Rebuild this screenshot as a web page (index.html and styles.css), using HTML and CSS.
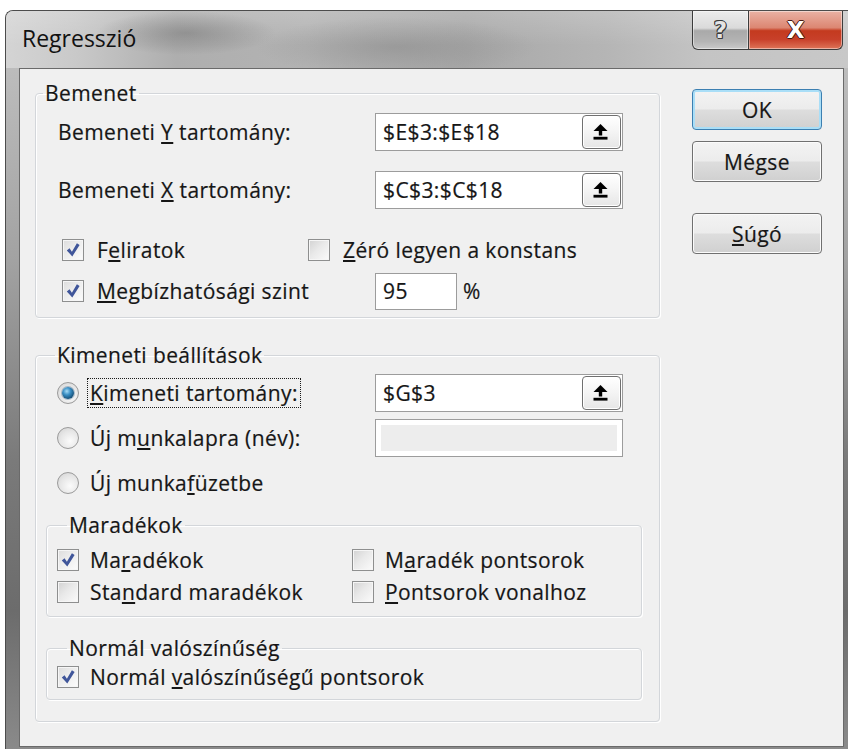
FILE: index.html
```html
<!DOCTYPE html>
<html lang="hu">
<head>
<meta charset="utf-8">
<title>Regresszió</title>
<link rel="stylesheet" href="styles.css">
</head>
<body>
<div class="window">
  <div class="titlebar">
    <span class="title">Regresszió</span>
    <div class="caption-buttons">
      <span class="cap-btn help">?</span>
      <span class="cap-btn close">X</span>
    </div>
  </div>

  <div class="client">
    <div class="main">
      <fieldset class="group group-input">
        <legend>Bemenet</legend>

        <div class="range-row">
          <span class="range-label">Bemeneti <u>Y</u> tartomány:</span>
          <div class="refedit">
            <span class="ref-text">$E$3:$E$18</span>
            <span class="collapse-btn">
              <svg width="15" height="16" viewBox="0 0 15 16"><polygon points="7.5,0 14.5,7 0.5,7" fill="#000"/><rect x="5.8" y="6" width="3.4" height="5.5" fill="#000"/><rect x="0.5" y="12.8" width="14" height="2.8" fill="#000"/></svg>
            </span>
          </div>
        </div>

        <div class="range-row range-row-x">
          <span class="range-label">Bemeneti <u>X</u> tartomány:</span>
          <div class="refedit">
            <span class="ref-text">$C$3:$C$18</span>
            <span class="collapse-btn">
              <svg width="15" height="16" viewBox="0 0 15 16"><polygon points="7.5,0 14.5,7 0.5,7" fill="#000"/><rect x="5.8" y="6" width="3.4" height="5.5" fill="#000"/><rect x="0.5" y="12.8" width="14" height="2.8" fill="#000"/></svg>
            </span>
          </div>
        </div>

        <div class="opt-row opt-row-first">
          <label class="check-item cell-labels">
            <span class="checkbox checked"><svg width="20" height="20" viewBox="0 0 20 20"><path d="M3.8 10.4 L6.5 8.2 L8.9 11.8 L13.9 3.2 L16.6 5 L9.3 16.4 Z" fill="#40569a"/></svg></span>
            <span>F<u>e</u>liratok</span>
          </label>
          <label class="check-item">
            <span class="checkbox"></span>
            <span><u>Z</u>éró legyen a konstans</span>
          </label>
        </div>

        <div class="opt-row opt-row-conf">
          <label class="check-item cell-conf">
            <span class="checkbox checked"><svg width="20" height="20" viewBox="0 0 20 20"><path d="M3.8 10.4 L6.5 8.2 L8.9 11.8 L13.9 3.2 L16.6 5 L9.3 16.4 Z" fill="#40569a"/></svg></span>
            <span><u>M</u>egbízhatósági szint</span>
          </label>
          <div class="textbox conf-box">95</div>
          <span class="percent">%</span>
        </div>
      </fieldset>

      <fieldset class="group group-output">
        <legend>Kimeneti beállítások</legend>

        <div class="radio-row radio-row-first">
          <label class="radio-item">
            <span class="radio selected"></span>
            <span class="radio-text focused"><u>K</u>imeneti tartomány:</span>
          </label>
          <div class="refedit">
            <span class="ref-text">$G$3</span>
            <span class="collapse-btn">
              <svg width="15" height="16" viewBox="0 0 15 16"><polygon points="7.5,0 14.5,7 0.5,7" fill="#000"/><rect x="5.8" y="6" width="3.4" height="5.5" fill="#000"/><rect x="0.5" y="12.8" width="14" height="2.8" fill="#000"/></svg>
            </span>
          </div>
        </div>

        <div class="radio-row">
          <label class="radio-item">
            <span class="radio"></span>
            <span class="radio-text">Új m<u>u</u>nkalapra (név):</span>
          </label>
          <div class="textbox disabled-box"></div>
        </div>

        <div class="radio-row">
          <label class="radio-item">
            <span class="radio"></span>
            <span class="radio-text">Új munka<u>f</u>üzetbe</span>
          </label>
        </div>

        <fieldset class="group sub-group group-residuals">
          <legend>Maradékok</legend>
          <div class="sub-row">
            <label class="check-item sub-cell">
              <span class="checkbox checked"><svg width="20" height="20" viewBox="0 0 20 20"><path d="M3.8 10.4 L6.5 8.2 L8.9 11.8 L13.9 3.2 L16.6 5 L9.3 16.4 Z" fill="#40569a"/></svg></span>
              <span>Ma<u>r</u>adékok</span>
            </label>
            <label class="check-item">
              <span class="checkbox"></span>
              <span>M<u>a</u>radék pontsorok</span>
            </label>
          </div>
          <div class="sub-row sub-row-second">
            <label class="check-item sub-cell">
              <span class="checkbox"></span>
              <span>Sta<u>n</u>dard maradékok</span>
            </label>
            <label class="check-item">
              <span class="checkbox"></span>
              <span><u>P</u>ontsorok vonalhoz</span>
            </label>
          </div>
        </fieldset>

        <fieldset class="group sub-group group-normal">
          <legend>Normál valószínűség</legend>
          <div class="sub-row">
            <label class="check-item">
              <span class="checkbox checked"><svg width="20" height="20" viewBox="0 0 20 20"><path d="M3.8 10.4 L6.5 8.2 L8.9 11.8 L13.9 3.2 L16.6 5 L9.3 16.4 Z" fill="#40569a"/></svg></span>
              <span>Normál <u>v</u>alószínűségű pontsorok</span>
            </label>
          </div>
        </fieldset>
      </fieldset>
    </div>

    <div class="actions">
      <span class="push-btn default">OK</span>
      <span class="push-btn">Mégse</span>
      <span class="push-btn help-btn"><u>S</u>úgó</span>
    </div>
  </div>
</div>
</body>
</html>
```

FILE: styles.css
```css
html, body {
  margin: 0;
  padding: 0;
  overflow: hidden;
  background: #ffffff;
}

body {
  font-family: "Open Sans", "Noto Sans", sans-serif;
  font-size: 21px;
  letter-spacing: 0.4px;
  color: #161616;
  -webkit-text-stroke: 0.2px #161616;
}

u {
  text-underline-offset: 2px;
}

/* ---- window frame ---- */
.window {
  margin: 10px 0 0 5px;
  width: 843px;
  height: 739px;
  box-sizing: border-box;
  border: 1px solid #4c4c4c;
  border-right: 0;
  border-bottom: 0;
  border-radius: 8px 0 0 0;
  overflow: hidden;
  display: flex;
  flex-direction: column;
  background: linear-gradient(180deg, #c4c4c4 0, #a2a2a2 250px, #7a7a7a 450px, #6c6c6c 600px, #8a8a8a 100%);
}

.titlebar {
  flex: none;
  height: 57px;
  display: flex;
  justify-content: space-between;
  align-items: flex-start;
  background:
    radial-gradient(ellipse 90px 22px at 180px 22px, rgba(105, 105, 105, 0.45), rgba(105, 105, 105, 0)),
    radial-gradient(ellipse 140px 30px at 390px 36px, rgba(120, 120, 120, 0.35), rgba(120, 120, 120, 0)),
    linear-gradient(180deg, rgba(255, 255, 255, 0.18), rgba(255, 255, 255, 0) 60%),
    linear-gradient(90deg, #d4d4d4 0, #c9c9c9 70px, #aeaeae 170px, #b3b3b3 300px, #a8a8a8 460px, #b5b5b5 600px, #c4c4c4 700px, #c8c8c8 100%);
}

.title {
  font-size: 23px;
  letter-spacing: 0;
  line-height: 30px;
  margin: 12px 0 0 16px;
  color: #111111;
  -webkit-text-stroke: 0;
}

.caption-buttons {
  display: flex;
  margin-right: 5px;
}

.cap-btn {
  height: 39px;
  box-sizing: border-box;
  border: 1px solid #3c3c3c;
  border-top: 0;
  display: flex;
  align-items: center;
  justify-content: center;
  font-family: "DejaVu Sans", sans-serif;
  font-weight: bold;
  letter-spacing: 0;
  color: #ffffff;
  -webkit-text-stroke: 0;
  box-shadow: inset 0 0 0 1px rgba(255, 255, 255, 0.45);
}

.help {
  width: 57px;
  border-radius: 0 0 0 6px;
  font-size: 23px;
  color: #e4e4e4;
  text-shadow: 1px 0 0 #3a3a3a, -1px 0 0 #3a3a3a, 0 1px 0 #3a3a3a, 0 -1px 0 #3a3a3a, 1px 1px 0 #3a3a3a, -1px -1px 0 #3a3a3a;
  background: linear-gradient(180deg, #ececec 0, #dadada 45%, #a9a9a9 52%, #b4b4b4 80%, #c9c9c9 100%);
}

.close {
  width: 94px;
  border-left: 0;
  border-radius: 0 0 6px 0;
  font-size: 23px;
  text-shadow: 0 0 1px #3a0a00, 1px 0 0 #4a1a10, -1px 0 0 #4a1a10, 0 1px 0 #4a1a10, 0 -1px 0 #4a1a10;
  background: linear-gradient(180deg, #eab2a4 0, #dc8672 44%, #c43a1f 52%, #c8402a 75%, #de7458 100%);
}

/* ---- client area ---- */
.client {
  flex: none;
  height: 679px;
  width: 825px;
  box-sizing: border-box;
  margin-left: 13px;
  border: 1px solid #6a6a6a;
  background: #f0f0f0;
  display: flex;
  align-items: flex-start;
}

.main {
  margin-left: 15px;
  width: 625px;
  flex: none;
}

/* ---- group boxes ---- */
.group {
  margin: 0;
  padding: 0;
  min-width: 0;
  border: 1px solid #d3d6da;
  border-radius: 4px;
  box-shadow: inset 1px 1px 0 #ffffff, 1px 1px 0 #ffffff;
}

.group legend {
  padding: 0 2px;
  line-height: 26px;
}

.group-input {
  margin-top: 11px;
  padding: 7px 0 7px 0;
}

.group-input legend {
  margin-left: 7px;
}

.group-output {
  margin-top: 24px;
  padding: 5px 17px 21px 10px;
}

.group-output legend {
  margin-left: 9px;
}

.sub-group legend {
  margin-left: 10px;
}

.group-residuals {
  margin-top: 10px;
  padding: 8px 0 10px 10px;
}

.group-normal {
  margin-top: 18px;
  padding: 2px 0 8px 10px;
}

/* ---- range rows ---- */
.range-row {
  display: flex;
  align-items: center;
  height: 38px;
  padding-left: 22px;
}

.range-row-x {
  margin-top: 20px;
}

.range-label {
  width: 317px;
  flex: none;
}

.refedit {
  width: 248px;
  height: 38px;
  box-sizing: border-box;
  border: 1px solid #9c9c9c;
  background: #ffffff;
  display: flex;
  align-items: center;
  justify-content: space-between;
  padding: 0 1px 0 7px;
}

.collapse-btn {
  width: 39px;
  height: 34px;
  box-sizing: border-box;
  border: 1px solid #707070;
  border-radius: 4px;
  background: linear-gradient(180deg, #ffffff 0, #f4f4f4 50%, #e6e6e6 100%);
  box-shadow: inset 0 0 0 1px #ffffff;
  display: flex;
  align-items: center;
  justify-content: center;
  padding-right: 3px;
}

/* ---- checkbox / radio options ---- */
.opt-row {
  display: flex;
  align-items: center;
  padding-left: 26px;
}

.opt-row-first {
  margin-top: 27px;
  height: 28px;
}

.opt-row-conf {
  margin-top: 8px;
  height: 38px;
}

.check-item {
  display: flex;
  align-items: center;
  gap: 13px;
  flex: none;
}

.cell-labels {
  width: 246px;
}

.cell-conf {
  width: 313px;
}

.checkbox {
  width: 22px;
  height: 22px;
  box-sizing: border-box;
  flex: none;
  border: 1px solid #8e8f8f;
  background: linear-gradient(135deg, #d2d2d2 0, #e9e9e9 45%, #fbfbfb 100%);
  box-shadow: inset 0 0 0 1px #f6f6f6;
  display: flex;
  align-items: center;
  justify-content: center;
}

.checkbox.checked {
  background: linear-gradient(135deg, #dcdcdc 0, #ededed 45%, #fcfcfc 100%);
}

.textbox {
  box-sizing: border-box;
  border: 1px solid #9c9c9c;
  background: #ffffff;
}

.conf-box {
  width: 82px;
  height: 37px;
  line-height: 35px;
  padding-left: 7px;
}

.percent {
  margin-left: 6px;
}

.radio-row {
  display: flex;
  align-items: center;
  height: 38px;
  margin-top: 7px;
  padding-left: 11px;
}

.radio-row-first {
  margin-top: 0;
  height: 39px;
}

.radio-item {
  display: flex;
  align-items: center;
  gap: 8px;
  width: 318px;
  flex: none;
}

.radio {
  width: 22px;
  height: 22px;
  box-sizing: border-box;
  flex: none;
  border-radius: 50%;
  border: 1px solid #9a9a9a;
  background: radial-gradient(circle at 60% 65%, #fbfbfb 0, #e6e6e6 55%, #cfcfcf 100%);
  display: flex;
  align-items: center;
  justify-content: center;
}

.radio.selected::after {
  content: "";
  width: 12px;
  height: 12px;
  border-radius: 50%;
  background: radial-gradient(circle at 40% 35%, #a6dcf6 0, #3b8fc4 35%, #18557f 70%, #0d3856 100%);
  box-shadow: 0 0 0 1px rgba(40, 90, 130, 0.35);
}

.radio-text {
  border: 1px dotted transparent;
  padding: 0 2px;
  line-height: 28px;
}

.radio-text.focused {
  border-color: #1a1a1a;
}

.disabled-box {
  width: 248px;
  height: 38px;
  background: #ededed;
  box-shadow: inset 0 0 0 5px #ffffff;
}

.sub-row {
  display: flex;
  align-items: center;
  height: 28px;
}

.sub-row-second {
  margin-top: 4px;
}

.sub-group .check-item {
  gap: 11px;
}

.sub-cell {
  width: 295px;
}

/* ---- dialog buttons ---- */
.actions {
  margin-left: 32px;
  width: 130px;
  flex: none;
  display: flex;
  flex-direction: column;
  padding-top: 20px;
}

.push-btn {
  height: 41px;
  box-sizing: border-box;
  border: 1px solid #707070;
  border-radius: 4px;
  display: flex;
  align-items: center;
  justify-content: center;
  background: linear-gradient(180deg, #f3f3f3 0, #ececec 48%, #dddddd 52%, #d0d0d0 100%);
  box-shadow: inset 0 0 0 1px #fbfbfb;
  margin-top: 11px;
}

.push-btn.default {
  margin-top: 0;
  border-color: #3c7fb1;
  box-shadow: inset 0 0 0 2px #a9def7;
}

.help-btn {
  margin-top: 31px;
}
```
